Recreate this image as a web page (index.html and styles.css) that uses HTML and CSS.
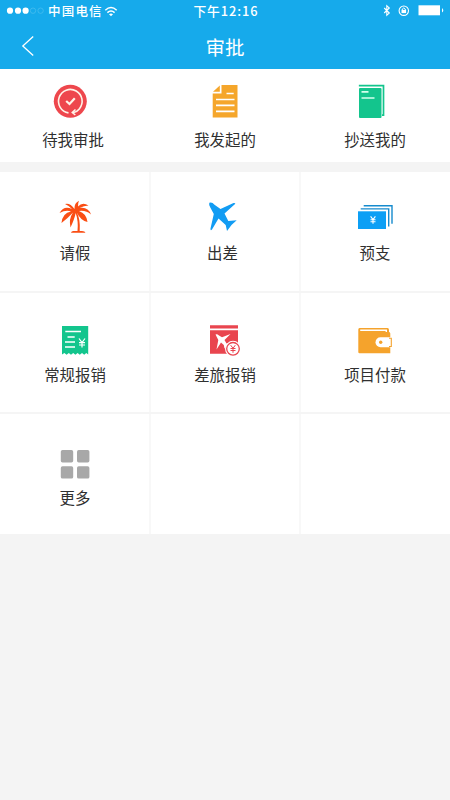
FILE: index.html
```html
<!DOCTYPE html>
<html lang="zh-CN">
<head>
<meta charset="utf-8">
<title>审批</title>
<link rel="stylesheet" href="styles.css">
</head>
<body>
<header class="header">
  <div class="status">
    <div class="status-left">
      <svg class="signal" width="38" height="10" viewBox="6 6 38 10"><g fill="#fff"><circle cx="10" cy="10.7" r="3.1"/><circle cx="18" cy="10.7" r="3.1"/><circle cx="25.6" cy="10.7" r="3.1"/></g><g fill="none" stroke="#45bcef" stroke-width=".8"><circle cx="33" cy="10.7" r="2.7"/><circle cx="40.6" cy="10.7" r="2.7"/></g></svg>
      <span class="carrier">中国电信</span>
      <svg width="14" height="12" viewBox="104 4 14 12" fill="none" stroke="#fff" stroke-width="1.5"><path d="M105.300 9.200Q111 3.800 116.700 9.200M107.400 11.600Q111 8.400 114.600 11.600"/><path d="M109 13.200Q111 11.600 113 13.200L111 15.200Z" fill="#fff" stroke="none"/></svg>
    </div>
    <span class="time">下午12:16</span>
    <div class="status-right">
      <svg width="64" height="14" viewBox="382 4 64 14" fill="none" stroke="#fff"><path d="M384.200 8L389.300 13L386.800 15.300V5.700L389.300 8L384.200 13" stroke-width="1.100"/><circle cx="403.800" cy="10.700" r="4.700" stroke-width="1.100"/><path d="M402.300 10V9Q403.800 6.800 405.300 9V10" stroke-width="1"/><path d="M401.500 9.900H406.100V13.100H401.500Z" fill="#fff" stroke="none"/><path d="M418.500 5.300H440V15.300H418.500Z" fill="#fff" stroke="none"/><path d="M442 8Q444.600 10.300 442 12.600Z" fill="#fff" stroke="none"/></svg>
    </div>
  </div>
  <div class="titlebar">
    <svg class="back" width="14" height="22" viewBox="21 35 14 22" fill="none" stroke="#fff" stroke-width="1.300"><path d="M33.200 36.500L22.800 46L33.200 55.500"/></svg>
    <h1>审批</h1>
  </div>
</header>

<nav class="tabs">
  <a class="item item-pending">
    <svg class="icon" viewBox="51 82 44 40"><circle cx="70.300" cy="101.300" r="16.500" fill="#ee474d"/><g fill="none" stroke="#fff3e8" stroke-width="1.600"><path d="M68.500 112.900A11.800 11.800 0 1 1 79.300 108.900Q77 112 73 112.600"/><path d="M75.500 109.500L72.300 112.500L75.300 115"/><path d="M66.200 101L69.500 104L74.800 98.300" stroke-width="2.200"/></g></svg>
    <span>待我审批</span>
  </a>
  <a class="item">
    <svg class="icon" viewBox="203 82 44 40"><path d="M221.500 85H237.500V117.500H212.700V93.500H221.500Z" fill="#f5a62b"/><path d="M213 91.700L219.800 85.500V91.700Z" fill="#f5a62b"/><path d="M226.500 93.500H233.700M216 99.500H234.500M216 105.400H234.500M216 111.300H234.500" stroke="#fff" stroke-width="1.700"/></svg>
    <span>我发起的</span>
  </a>
  <a class="item">
    <svg class="icon" viewBox="353 82 44 40"><path d="M359.700 86.500V85.700H383.500V115.200H382" fill="none" stroke="#13c58d" stroke-width="1.700"/><rect x="359" y="88" width="22.500" height="30" rx="1" fill="#13c58d"/><path d="M361.500 91.800H368.500M361.500 98H374.500" stroke="#d5ffee" stroke-width="1.700"/></svg>
    <span>抄送我的</span>
  </a>
</nav>

<main class="grid">
  <a class="item">
    <svg class="icon" viewBox="53 197 44 40" fill="#fa4e14"><path d="M74.500 209Q70 202.500 65 204Q69.500 206 72 209Q64 205 59.500 213Q66 209.500 71 211.500Q62.500 213 61.500 223Q67 219 73 212.500Q68.500 219 70.500 227.500Q74.500 219 75.700 213Q78.500 221 77.500 231H73Q71 231.500 71 232.700H85.500Q85 231 82 231H79.700Q80.500 219 76.800 212.500Q81 221 87.500 222Q86.500 213.500 79 211Q86 210 91 214.500Q88 206.500 79.500 208Q84 205.500 88.500 205.500Q82.500 201.500 78 206.500Q78 202.500 79 200.700Q74 203 74.500 209Z"/></svg>
    <span>请假</span>
  </a>
  <a class="item item-trip">
    <svg class="icon" viewBox="203 197 44 40"><path d="M209.300 202.800Q212 201.800 214.500 204.700L220.500 209L233.500 203Q236.500 202.600 234.500 204.500L224.500 213.500L228.300 221L236.700 220.300L231.500 225L227 231L225.700 225L218.500 218.500L212 229.500Q210.300 231.300 210.500 228.500L213.800 214L210.300 207.500Q208.600 205 209.300 202.800Z" fill="#129cf3"/></svg>
    <span>出差</span>
  </a>
  <a class="item">
    <svg class="icon" viewBox="353 197 44 40"><path d="M358 211.300H386V229H358Z" fill="#0c9ff5"/><path d="M360.700 208.900H388.700V226.500M363.700 205.700H392V223.800" fill="none" stroke="#168bce" stroke-width="1.400"/><path d="M370.600 216.300L373 219.500L375.400 216.300M373 219.300V223.700M370.500 219.700H375.500M370.500 221.700H375.500" fill="none" stroke="#fff" stroke-width="1.100"/></svg>
    <span>预支</span>
  </a>
  <a class="item">
    <svg class="icon" viewBox="53 320 44 40"><path d="M62 326H88.200V354.500L86.300 353L84.200 354.800L82 353L79.800 354.800L77.600 353L75.400 354.800L73.200 353L71 354.800L68.800 353L66.600 354.800L64.400 353L62 354.500Z" fill="#13c58d"/><g fill="none" stroke="#fff"><path d="M65.300 331.500H81M67.500 337H74.700M65 342H75M65 347H75" stroke-width="1.500"/><path d="M79 338.500L82 342.500L85 338.500M82 342.500V347.500M79 342.700H85M79 345H85" stroke-width="1.200"/></g></svg>
    <span>常规报销</span>
  </a>
  <a class="item">
    <svg class="icon" viewBox="203 320 44 40"><path d="M210 325.200H238V328.600H210ZM210 330.300H238V353.800H210Z" fill="#e9454f"/><path d="M215.500 334.500Q217 333.500 219 335.500L222 337.200L230.500 334L224.500 340L226.500 343.500L230 343L227 346L224.500 348.500L223.800 345L221 342.500L216.500 349.500L218.300 340Z" fill="#fff"/><circle cx="233" cy="348.800" r="8" fill="#fff"/><circle cx="233" cy="348.800" r="6.300" fill="#fff" stroke="#e9454f" stroke-width="1.300"/><path d="M230.700 345.200L233 348.300L235.300 345.200M233 348V352.800M230.500 348.500H235.500M230.500 350.500H235.500" fill="none" stroke="#e9454f"/></svg>
    <span>差旅报销</span>
  </a>
  <a class="item">
    <svg class="icon" viewBox="353 320 44 40"><path d="M359.500 328H387.500Q389 328 389 330V332Q390.300 332 390.300 333.500V353.200H359.500Q358.300 353.200 358.300 352V329.500Q358.300 328 359.500 328Z" fill="#f5a32c"/><path d="M360.200 330.300H386.300V332" fill="none" stroke="#fff" stroke-width="1.400"/><path d="M380.500 337.300H392.500V347.300H380.500A5 5 0 0 1 380.500 337.300Z" fill="#fff"/><path d="M389 338.200H391.300V346.500H389" fill="none" stroke="#f5a32c" stroke-width="1.100"/><circle cx="380.700" cy="342.300" r="1.700" fill="#f5a32c"/></svg>
    <span>项目付款</span>
  </a>
  <a class="item">
    <svg class="icon" viewBox="53 443 44 40" fill="#a8a8a8"><rect x="60.800" y="450" width="12.400" height="12.400" rx="1.700"/><rect x="77" y="450" width="12.400" height="12.400" rx="1.700"/><rect x="60.800" y="466.200" width="12.400" height="12.400" rx="1.700"/><rect x="77" y="466.200" width="12.400" height="12.400" rx="1.700"/></svg>
    <span>更多</span>
  </a>
  <div class="item"></div>
  <div class="item"></div>
</main>
</body>
</html>
```
FILE: styles.css
```css
* { box-sizing: border-box; }

body {
  margin: 0;
  min-height: 800px;
  background: #f4f4f4;
  color: #303030;
  font-family: "Noto Sans CJK SC", sans-serif;
}

.header {
  height: 69px;
  background: #16aaeb;
  color: #fff;
}

.status {
  display: grid;
  grid-template-columns: 1fr auto 1fr;
  align-items: center;
  height: 21px;
  padding: 0 4px 0 6px;
}

.status-left {
  display: flex;
  align-items: center;
  gap: 4px;
}

.carrier {
  font-size: 12.5px;
  line-height: 20px;
  letter-spacing: 1.2px;
  font-weight: 500;
  margin-right: -3px;
}

.time {
  font-size: 12.8px;
  line-height: 20px;
  letter-spacing: 0.95px;
  font-weight: 500;
}

.status-right {
  display: flex;
  justify-content: flex-end;
}

.titlebar {
  display: grid;
  grid-template-columns: 14px 1fr 14px;
  align-items: center;
  height: 50px;
  padding: 0 21px;
}

.titlebar h1 {
  margin: 0;
  padding-top: 2px;
  text-align: center;
  font-size: 19.5px;
  line-height: 28px;
  font-weight: 400;
}

.tabs {
  display: grid;
  grid-template-columns: repeat(3, 150px);
  height: 93px;
  margin-bottom: 10px;
  background: #fff;
}

.grid {
  display: grid;
  grid-template-columns: repeat(3, 150px);
  grid-template-rows: 119px 119px 120px;
  row-gap: 2px;
  background: #f5f5f5;
}

.item {
  display: flex;
  flex-direction: column;
  align-items: center;
  padding-top: 13px;
  font-size: 15.4px;
  line-height: 20px;
  background: #fff;
}

.item span { margin-top: 7px; }

.item-pending { padding-right: 4px; }

.icon {
  display: block;
  flex: none;
  width: 44px;
  height: 40px;
}

.grid .item {
  padding-top: 25px;
  box-shadow: inset -1px 0 #f8f8f8;
}

.grid .item:nth-child(n + 4) { padding-top: 27px; }

.grid .item:nth-child(n + 7) { padding-top: 29px; }

.grid .item:nth-child(3n + 2) { box-shadow: inset 1px 0 #f8f8f8, inset -1px 0 #f8f8f8; }

.grid .item:nth-child(3n) { box-shadow: inset 1px 0 #f8f8f8; }

.grid .item span { margin-top: 5px; }

.grid .item:nth-child(n + 4) span { margin-top: 4px; }

.grid .item-trip span { margin-right: 5px; }
```
